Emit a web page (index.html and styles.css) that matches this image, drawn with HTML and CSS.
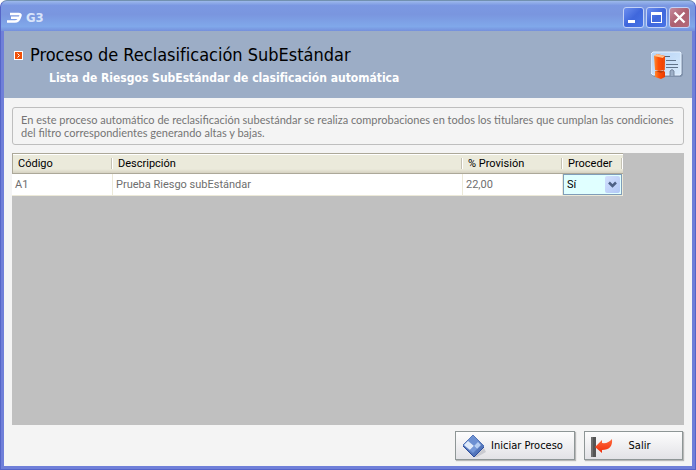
FILE: index.html
```html
<!DOCTYPE html>
<html lang="es">

<head>
  <meta charset="UTF-8" />
  <meta name="viewport" content="width=device-width, initial-scale=1.0">
  <title>G3</title>
  <link rel="stylesheet" href="styles.css">
</head>

<body>
  <div class="window">
    <div class="titlebar">
      <svg class="app-logo" width="16" height="14" viewBox="0 0 16 14" fill="none" stroke="#fff" stroke-width="2.400">
        <path d="M4 3H13Q15.500 3 14 6Q12.500 10.500 9 10.500H1M5 6.800H13" />
      </svg>
      <span class="app-name">G3</span>
      <div class="window-buttons">
        <button type="button" class="win-btn" aria-label="Minimizar">
          <svg width="19" height="19" viewBox="0 0 19 19"><path d="M4 12h7v3H4z" fill="#fff" /></svg>
        </button>
        <button type="button" class="win-btn" aria-label="Maximizar">
          <svg width="19" height="19" viewBox="0 0 19 19"><path d="M4 4h11v11H4zM5 7v7h9V7z" fill="#fff" fill-rule="evenodd" /></svg>
        </button>
        <button type="button" class="win-btn close" aria-label="Cerrar">
          <svg width="19" height="19" viewBox="0 0 19 19"><path d="M4.500 4.500l10 10M14.500 4.500l-10 10" stroke="#fff" stroke-width="2.400" /></svg>
        </button>
      </div>
    </div>

    <header class="header">
      <div class="headings">
        <h1>
          <svg width="9" height="9" viewBox="0 0 9 9">
            <path d="M0 0h9v9H0z" fill="#fff" />
            <path d="M1 1h7v7H1z" fill="#f05008" />
            <path d="M3.500 2.500l2 2-2 2" fill="none" stroke="#fff" />
          </svg>
          Proceso de Reclasificación SubEstándar
        </h1>
        <h2>Lista de Riesgos SubEstándar de clasificación automática</h2>
      </div>
      <svg class="header-icon" width="32" height="30" viewBox="0 0 32 30">
        <defs>
          <linearGradient id="card" x1="0" y1="0" x2="1" y2="1">
            <stop offset="0" stop-color="#b5d3f5" />
            <stop offset="1" stop-color="#d8eafc" />
          </linearGradient>
          <linearGradient id="mark" x1="0" y1="0" x2="1" y2="0">
            <stop offset="0" stop-color="#ff8a30" />
            <stop offset=".4" stop-color="#ff5008" />
            <stop offset="1" stop-color="#e93c00" />
          </linearGradient>
        </defs>
        <path d="M3 2H30L32 4V24L30 26H3L1 24V4z" fill="#7f91ab" />
        <path d="M2 1H29L30 2V23L29 24H23V20Q21 17 19 20V24H2L0 22V3z" fill="url(#card)" stroke="#e7f2ff" />
        <path d="M19 25V20Q21 17 23 20V25" fill="#9dafc7" stroke="#75869e" />
        <path d="M13 5l1 1 1-1 1 1 1-1 1 1 1-1" fill="none" stroke="#526477" />
        <path d="M15 9.500h10M15 13.500h12M15 16.500h12" stroke="#60738a" />
        <path d="M3 5L6 3L14 5L13.500 19L8 20L4 19z" fill="url(#mark)" />
        <path d="M3 5L6 3L14 5L12 7z" fill="#ffc08a" />
        <path d="M12 7L14 5L13.500 19L12 20z" fill="#f04a05" />
        <path d="M4 20L13 20L14 21V26L10 28L4 26z" fill="url(#mark)" />
        <path d="M5 20L13 20L10 22z" fill="#b8400e" />
      </svg>
    </header>

    <main class="content">
      <p class="notice">En este proceso automático de reclasificación subestándar se realiza comprobaciones en todos los titulares que cumplan las condiciones del filtro correspondientes generando altas y bajas.</p>

      <div class="grid">
        <table>
          <colgroup>
            <col class="col-code">
            <col class="col-desc">
            <col class="col-prov">
            <col class="col-proc">
          </colgroup>
          <thead>
            <tr>
              <th>Código</th>
              <th>Descripción</th>
              <th>% Provisión</th>
              <th id="proceder">Proceder</th>
            </tr>
          </thead>
          <tbody>
            <tr>
              <td>A1</td>
              <td>Prueba Riesgo subEstándar</td>
              <td>22,00</td>
              <td class="cell-select">
                <div class="combo">
                  <select aria-labelledby="proceder">
                    <option>Sí</option>
                    <option>No</option>
                  </select>
                  <svg class="arrow" width="15" height="17" viewBox="0 0 15 17">
                    <path d="M4 6.500l3.500 3.500L11 6.500" fill="none" stroke="#4d6185" stroke-width="2.500" />
                  </svg>
                </div>
              </td>
            </tr>
          </tbody>
        </table>
      </div>

      <div class="actions">
        <button type="button" class="action start">
          <svg width="24" height="24" viewBox="0 0 24 24">
            <defs>
              <linearGradient id="disk" x1="0" y1="0" x2="1" y2="1">
                <stop offset="0" stop-color="#8eafe0" />
                <stop offset="1" stop-color="#3c5fae" />
              </linearGradient>
            </defs>
            <path d="M12 23L22 14L24 18L15 23z" fill="#c9cad0" />
            <path d="M1 11L11 1L22 12L12 22z" fill="url(#disk)" stroke="#5274b8" />
            <path d="M1 12L12 23L22 13" fill="none" stroke="#2c4c9c" />
            <path d="M6 6L11 2L17 8L12 12z" fill="#6c90d2" />
            <path d="M2 11L6 7L12 12L8 16z" fill="#dfeafa" />
            <path d="M12 12L16 8L19 11L15 15z" fill="#b4cdf2" />
            <path d="M8 16L12 12L15 15L11 19z" fill="#7598d8" />
          </svg>
          <span>Iniciar Proceso</span>
        </button>
        <button type="button" class="action exit">
          <svg width="24" height="24" viewBox="0 0 24 24">
            <defs>
              <linearGradient id="back" x1="0" y1="0" x2="0" y2="1">
                <stop offset="0" stop-color="#ff6a3c" />
                <stop offset="1" stop-color="#f02c08" />
              </linearGradient>
            </defs>
            <path d="M0 3h5v20H0z" fill="#555" />
            <path d="M1 3v20" stroke="#888" />
            <path d="M4 13L11 6V9Q17 10 21 5Q22 16 11 16V19z" fill="url(#back)" />
          </svg>
          <span>Salir</span>
        </button>
      </div>
    </main>
  </div>
</body>

</html>
```

FILE: styles.css
```css
* {
  box-sizing: border-box;
}

body {
  margin: 0;
  background: #fff;
  font-family: "DejaVu Sans Condensed", "DejaVu Sans", sans-serif;
  font-size: 11px;
}

button,
select {
  font: inherit;
}

.window {
  display: flex;
  flex-direction: column;
  min-height: 100vh;
  padding: 0 3px 3px;
  background: #6f7fd9;
  border: 1px solid #5565c8;
  border-top-color: #7291b0;
  border-radius: 7px 7px 0 0;
}

.titlebar {
  display: flex;
  align-items: center;
  height: 30px;
  margin: 0 -3px;
  padding: 3px 5px 0;
  border-radius: 6px 6px 0 0;
  background: linear-gradient(#9db9ec 0, #7b98e2 15%, #7a96df 45%, #80a8ea 85%, #7590dc 100%);
}

.app-name {
  margin-left: 4px;
  color: #d8e4fa;
  font-size: 13px;
  font-weight: bold;
}

.window-buttons {
  display: flex;
  gap: 2px;
  margin-left: auto;
}

.win-btn {
  width: 21px;
  height: 21px;
  padding: 0;
  border: 1px solid #c3d2f6;
  border-radius: 3px;
  background: linear-gradient(135deg, #6c8ff0, #3f67dc 50%, #4774e6);
}

.win-btn svg {
  display: block;
}

.win-btn.close {
  background: linear-gradient(135deg, #c58a9c, #ad6070 50%, #b4697a);
}

.header {
  display: flex;
  align-items: center;
  justify-content: space-between;
  height: 67px;
  padding: 3px 9px 0 10px;
  background: #9cadc6;
}

.header h1 {
  display: flex;
  align-items: center;
  gap: 7px;
  margin: 0;
  color: #000;
  font-size: 18px;
  font-weight: normal;
  line-height: 24px;
}

.header h2 {
  margin: 0 0 0 35px;
  color: #fff;
  font-size: 12px;
  line-height: 22px;
}

.header-icon {
  flex: none;
}

.content {
  flex: 1;
  display: flex;
  flex-direction: column;
  padding: 9px 8px 6px;
  background: #f4f4f4;
}

.notice {
  margin: 0 0 8px;
  padding: 5px 4px 5px 8px;
  border: 1px solid #bebebe;
  border-radius: 3px;
  color: #757575;
  font-family: Lato, sans-serif;
  line-height: 13px;
}

.grid {
  flex: 1;
  background: #c0c0c0;
  font-family: Roboto, sans-serif;
}

.grid table {
  width: 611px;
  max-width: 100%;
  table-layout: fixed;
  border-collapse: separate;
  border-spacing: 0;
}

.col-code {
  width: 101px;
}

.col-prov {
  width: 100px;
}

.col-proc {
  width: 60px;
}

.grid th {
  height: 21px;
  padding: 0 5px;
  border-top: 1px solid #aca899;
  border-bottom: 1px solid #aca899;
  background:
    linear-gradient(#c5c2b4, #c5c2b4) right 1px top 4px / 1px 11px no-repeat,
    linear-gradient(#fff, #fff) right 0 top 4px / 1px 11px no-repeat,
    linear-gradient(#fff 1px, #ebeadb 1px, #ebeadb 15px, #d6d2c2 19px);
  color: #000;
  font-weight: normal;
  text-align: left;
}

.grid th:first-child {
  border-left: 1px solid #aca899;
}

.grid td {
  height: 22px;
  padding: 0 3px;
  border-right: 1px solid #ece9d8;
  border-bottom: 1px solid #ece9d8;
  background: #fff;
  color: #6e6e6e;
}

.grid .cell-select {
  padding: 0;
}

.combo {
  display: grid;
  align-items: center;
  height: 21px;
  border: 1px solid #7f9db9;
  background: #e0ffff;
}

.combo select,
.combo .arrow {
  grid-area: 1 / 1;
}

.combo select {
  width: 100%;
  padding: 0 3px;
  appearance: none;
  border: 0;
  background: transparent;
  color: #000;
}

.combo .arrow {
  justify-self: end;
  margin-right: 1px;
  border-radius: 2px;
  background: linear-gradient(135deg, #d2e0fd, #b2c8f6);
  pointer-events: none;
}

.actions {
  display: flex;
  justify-content: flex-end;
  gap: 9px;
  padding: 6px 1px 0 0;
}

.action {
  display: flex;
  align-items: center;
  height: 29px;
  padding: 0 6px;
  border: 1px solid #8e9696;
  background: linear-gradient(#fdfdfd, #e2e2e6);
  box-shadow: 1px 1px 1px #b8b8b8;
  color: #000;
}

.action span {
  flex: 1;
  text-align: center;
}

.start {
  width: 120px;
}

.exit {
  width: 99px;
  padding-right: 18px;
}
```
